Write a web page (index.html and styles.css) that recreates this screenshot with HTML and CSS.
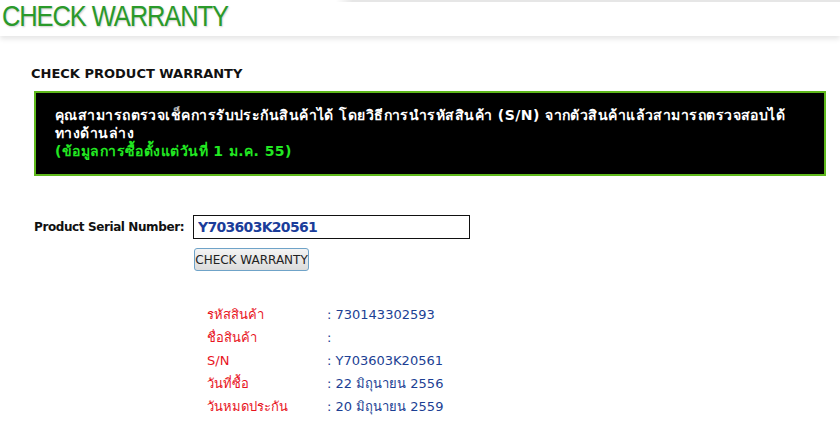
FILE: index.html
```html
<!DOCTYPE html>
<html lang="th">
  <head>
    <meta charset="UTF-8">
    <title>Check Warranty</title>
    <link rel="stylesheet" href="styles.css">
  </head>
  <body>
    <header class="top__bar">
      <h1>CHECK WARRANTY</h1>
    </header>

    <div class="content">
      <h2>CHECK PRODUCT WARRANTY</h2>

      <div class="notice">
        <p>คุณสามารถตรวจเช็คการรับประกันสินค้าได้ โดยวิธีการนำรหัสสินค้า (S/N) จากตัวสินค้าแล้วสามารถตรวจสอบได้<br>ทางด้านล่าง</p>
        <p class="notice__green">(ข้อมูลการซื้อตั้งแต่วันที่ 1 ม.ค. 55)</p>
      </div>

      <form class="serial__form">
        <div class="form__row">
          <label for="sn">Product Serial Number:</label>
          <input type="text" id="sn" value="Y703603K20561">
        </div>
        <div class="form__row">
          <span class="form__spacer"></span>
          <button type="button">CHECK WARRANTY</button>
        </div>
      </form>

      <table class="result">
        <tr><td class="result__label">รหัสสินค้า</td><td>: 730143302593</td></tr>
        <tr><td class="result__label">ชื่อสินค้า</td><td>:</td></tr>
        <tr><td class="result__label">S/N</td><td>: Y703603K20561</td></tr>
        <tr><td class="result__label">วันที่ซื้อ</td><td>: 22 มิถุนายน 2556</td></tr>
        <tr><td class="result__label">วันหมดประกัน</td><td>: 20 มิถุนายน 2559</td></tr>
      </table>
    </div>
  </body>
</html>
```

FILE: styles.css
```css
* {
  margin: 0;
  padding: 0;
  box-sizing: border-box;
}

body {
  background-color: #ffffff;
  font-family: Tahoma, "DejaVu Sans", Verdana, sans-serif;
  width: 840px;
  height: 424px;
  overflow: hidden;
}

.top__bar {
  height: 36px;
  border-top: 2px solid;
  border-image: linear-gradient(to right, #ffffff 40%, #e6e6e6 42%) 1;
  box-shadow: 0 3px 5px rgba(0, 0, 0, 0.1);
  padding-left: 2px;
}

h1 {
  font-family: "Liberation Sans", Arial, sans-serif;
  font-weight: 400;
  font-size: 30px;
  line-height: 28px;
  letter-spacing: -1.3px;
  color: #2a9a2a;
  text-shadow: 1px 1px 2px rgba(0, 0, 0, 0.2);
  transform: scaleX(0.85);
  transform-origin: left;
}

.content {
  padding: 30px 14px 0 31px;
}

h2 {
  font-size: 13px;
  font-weight: 700;
  color: #111111;
  line-height: 16px;
}

.notice {
  margin: 9px 0 0 3px;
  width: 792px;
  height: 85px;
  background-color: #000000;
  border: 2px solid #5fb81c;
  padding: 13px 10px 0 19px;
  color: #ffffff;
  font-size: 14px;
  font-weight: 700;
  line-height: 18px;
  letter-spacing: 0.45px;
}

.notice__green {
  color: #22e822;
}

.serial__form {
  margin: 39px 0 0 3px;
  display: flex;
  flex-direction: column;
  gap: 9px;
}

.form__row {
  display: flex;
  align-items: center;
}

label,
.form__spacer {
  width: 159px;
  font-size: 12px;
  font-weight: 700;
  letter-spacing: -0.4px;
  color: #111111;
}

input {
  width: 277px;
  height: 24px;
  border: 1px solid #111111;
  padding: 0 4px;
  font-family: Tahoma, "DejaVu Sans", Verdana, sans-serif;
  font-size: 14px;
  font-weight: 700;
  letter-spacing: -0.7px;
  color: #1b3d9a;
}

button {
  width: 115px;
  height: 23px;
  margin-left: 1px;
  border: 1px solid #6fa3c8;
  border-radius: 3px;
  background: linear-gradient(#f4f4f4, #dcdcdc);
  font-family: Tahoma, "DejaVu Sans", Verdana, sans-serif;
  font-size: 12px;
  color: #222222;
}

.result {
  margin: 32px 0 0 176px;
  border-collapse: collapse;
  font-size: 13px;
}

.result td {
  height: 23px;
  padding: 0;
  color: #1c3f94;
}

.result td.result__label {
  width: 120px;
  color: #e8141e;
}
```
